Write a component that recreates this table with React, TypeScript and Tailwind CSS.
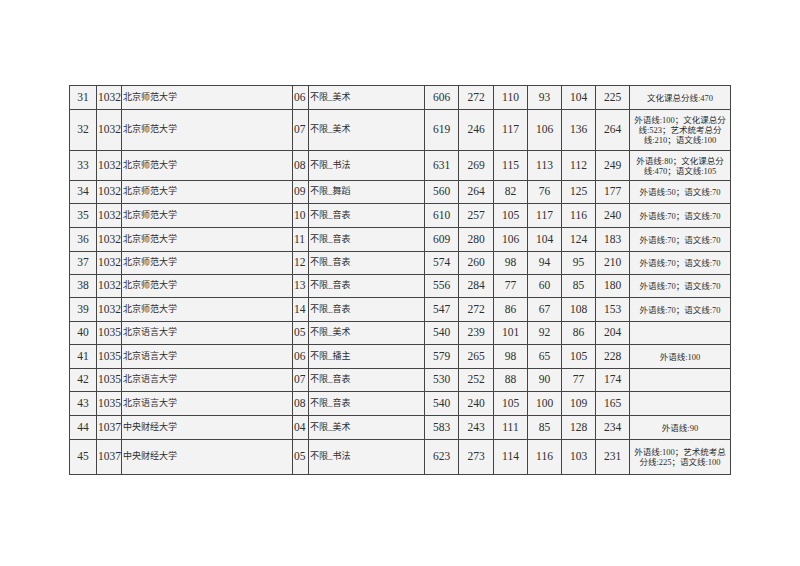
import React from "react";

type Row = {
  n: string;
  code: string;
  school: string;
  m: string;
  major: string;
  a: string;
  b: string;
  c: string;
  d: string;
  e: string;
  f: string;
  note: string[];
  h: string;
};

const BS = "北京师范大学";
const BY = "北京语言大学";
const ZY = "中央财经大学";
const W70 = ["外语线:70；语文线:70"];

const rows: Row[] = [
  { n: "31", code: "1032", school: BS, m: "06", major: "不限_美术", a: "606", b: "272", c: "110", d: "93", e: "104", f: "225", note: ["文化课总分线:470"], h: "h-[24px]" },
  { n: "32", code: "1032", school: BS, m: "07", major: "不限_美术", a: "619", b: "246", c: "117", d: "106", e: "136", f: "264", note: ["外语线:100；文化课总分", "线:523；艺术统考总分", "线:210；语文线:100"], h: "h-[41px]" },
  { n: "33", code: "1032", school: BS, m: "08", major: "不限_书法", a: "631", b: "269", c: "115", d: "113", e: "112", f: "249", note: ["外语线:80；文化课总分", "线:470；语文线:105"], h: "h-[30px]" },
  { n: "34", code: "1032", school: BS, m: "09", major: "不限_舞蹈", a: "560", b: "264", c: "82", d: "76", e: "125", f: "177", note: ["外语线:50；语文线:70"], h: "h-[23px]" },
  { n: "35", code: "1032", school: BS, m: "10", major: "不限_音表", a: "610", b: "257", c: "105", d: "117", e: "116", f: "240", note: W70, h: "h-[24px]" },
  { n: "36", code: "1032", school: BS, m: "11", major: "不限_音表", a: "609", b: "280", c: "106", d: "104", e: "124", f: "183", note: W70, h: "h-[24px]" },
  { n: "37", code: "1032", school: BS, m: "12", major: "不限_音表", a: "574", b: "260", c: "98", d: "94", e: "95", f: "210", note: W70, h: "h-[23px]" },
  { n: "38", code: "1032", school: BS, m: "13", major: "不限_音表", a: "556", b: "284", c: "77", d: "60", e: "85", f: "180", note: W70, h: "h-[23px]" },
  { n: "39", code: "1032", school: BS, m: "14", major: "不限_音表", a: "547", b: "272", c: "86", d: "67", e: "108", f: "153", note: W70, h: "h-[24px]" },
  { n: "40", code: "1035", school: BY, m: "05", major: "不限_美术", a: "540", b: "239", c: "101", d: "92", e: "86", f: "204", note: [], h: "h-[23px]" },
  { n: "41", code: "1035", school: BY, m: "06", major: "不限_播主", a: "579", b: "265", c: "98", d: "65", e: "105", f: "228", note: ["外语线:100"], h: "h-[24px]" },
  { n: "42", code: "1035", school: BY, m: "07", major: "不限_音表", a: "530", b: "252", c: "88", d: "90", e: "77", f: "174", note: [], h: "h-[23px]" },
  { n: "43", code: "1035", school: BY, m: "08", major: "不限_音表", a: "540", b: "240", c: "105", d: "100", e: "109", f: "165", note: [], h: "h-[24px]" },
  { n: "44", code: "1037", school: ZY, m: "04", major: "不限_美术", a: "583", b: "243", c: "111", d: "85", e: "128", f: "234", note: ["外语线:90"], h: "h-[24px]" },
  { n: "45", code: "1037", school: ZY, m: "05", major: "不限_书法", a: "623", b: "273", c: "114", d: "116", e: "103", f: "231", note: ["外语线:100；艺术统考总", "分线:225；语文线:100"], h: "h-[35px]" },
];

const cell = "border-[1.5px] border-[#444] p-0 align-middle";
const num = `${cell} text-center text-[11.5px]`;

export default function App() {
  return (
    <div className="min-h-[566px] w-[800px] bg-white pt-[85px] pl-[69px] font-['Liberation_Serif','Noto_Sans_CJK_SC',serif] text-[#2e2e2e]">
      <table className="w-[661px] table-fixed border-collapse bg-[#f3f3f3]">
        <colgroup>
          <col className="w-[27px]" />
          <col className="w-[25px]" />
          <col className="w-[171px]" />
          <col className="w-[16px]" />
          <col className="w-[116px]" />
          <col className="w-[34px]" />
          <col className="w-[35px]" />
          <col className="w-[34px]" />
          <col className="w-[34px]" />
          <col className="w-[34px]" />
          <col className="w-[34px]" />
          <col className="w-[101px]" />
        </colgroup>
        <tbody>
          {rows.map((r) => (
            <tr key={r.n} className={r.h}>
              <td className={`${cell} text-center text-[11.5px]`}>{r.n}</td>
              <td className={`${cell} pl-[1px] text-[11.5px] whitespace-nowrap`}>{r.code}</td>
              <td className={`${cell} pl-[1px] text-[9px] whitespace-nowrap`}>{r.school}</td>
              <td className={`${cell} pl-[1px] text-[11.5px] whitespace-nowrap`}>{r.m}</td>
              <td className={`${cell} pl-[1px] text-[9px] whitespace-nowrap`}>{r.major}</td>
              <td className={num}>{r.a}</td>
              <td className={num}>{r.b}</td>
              <td className={num}>{r.c}</td>
              <td className={num}>{r.d}</td>
              <td className={num}>{r.e}</td>
              <td className={num}>{r.f}</td>
              <td className={`${cell} text-center text-[8.5px] leading-[10px] whitespace-nowrap`}>
                {r.note.map((l, i) => (
                  <div key={i}>{l}</div>
                ))}
              </td>
            </tr>
          ))}
        </tbody>
      </table>
    </div>
  );
}
